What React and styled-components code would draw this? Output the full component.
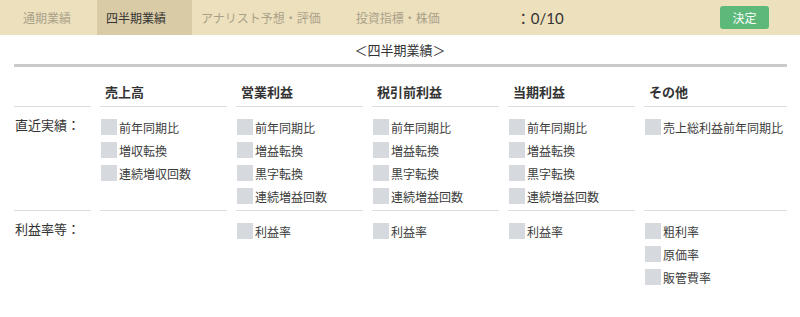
import React from "react";
import styled, { createGlobalStyle } from "styled-components";

const Global = createGlobalStyle`
  html, body { margin: 0; padding: 0; background: #fff; }
  body { font-family: "Noto Sans CJK JP", "Noto Sans", sans-serif; color: #333; }
`;

const TopBar = styled.div`
  display: flex;
  align-items: stretch;
  height: 35px;
  padding-left: 14px;
  background: #ede0bd;
`;

const Tab = styled.div`
  display: flex;
  align-items: center;
  padding: 0 26px 0 9px;
  font-size: 12px;
  color: ${(p) => (p.$active ? "#333" : "#a9a08a")};
  background: ${(p) => (p.$active ? "#d9cba6" : "transparent")};
`;

const Counter = styled.div`
  display: flex;
  align-items: center;
  margin-left: 50px;
  font-family: Lato, "Noto Sans CJK JP", sans-serif;
  font-size: 15px;
  color: #333;
`;

const Spacer = styled.div`
  flex: 1;
`;

const Button = styled.button`
  align-self: center;
  margin-right: 31px;
  width: 49px;
  height: 23px;
  border: none;
  border-radius: 3px;
  background: #5cb979;
  color: #fff;
  font-family: inherit;
  font-size: 12px;
  padding: 0;
`;

const Title = styled.div`
  text-align: center;
  font-size: 13px;
  line-height: 20px;
  padding: 5px 0 4px;
  color: #333;
`;

const Grid = styled.div`
  margin: 0 13px 0 14px;
  border-top: 3px solid #cacaca;
  display: grid;
  grid-template-columns: 77px repeat(4, 127px) 1fr;
  column-gap: 9px;
`;

const Head = styled.div`
  padding: 15px 0 4px 5px;
  line-height: 20px;
  font-size: 13px;
  font-weight: bold;
  color: #333;
  border-bottom: 1px solid #dcdcdc;
`;

const Cell = styled.div`
  display: flex;
  flex-direction: column;
  gap: 7px;
  padding: 12px 0 6px 1px;
  border-bottom: ${(p) => (p.$last ? "none" : "1px solid #dcdcdc")};
`;

const Label = styled.div`
  padding: 10px 0 6px 1px;
  font-size: 13px;
  line-height: 16px;
  color: #333;
  border-bottom: ${(p) => (p.$last ? "none" : "1px solid #dcdcdc")};
`;

const Item = styled.label`
  display: flex;
  align-items: center;
  height: 16px;
  font-size: 12px;
  color: #3c3c3c;
  white-space: nowrap;
`;

const Box = styled.span`
  width: 16px;
  height: 16px;
  background: #d6d9dd;
  margin-right: 2px;
  flex: none;
`;

const tabs = ["通期業績", "四半期業績", "アナリスト予想・評価", "投資指標・株価"];
const heads = ["売上高", "営業利益", "税引前利益", "当期利益", "その他"];
const sec1 = [
  ["前年同期比", "増収転換", "連続増収回数"],
  ["前年同期比", "増益転換", "黒字転換", "連続増益回数"],
  ["前年同期比", "増益転換", "黒字転換", "連続増益回数"],
  ["前年同期比", "増益転換", "黒字転換", "連続増益回数"],
  ["売上総利益前年同期比"],
];
const sec2 = [[], ["利益率"], ["利益率"], ["利益率"], ["粗利率", "原価率", "販管費率"]];

function Section({ label, cols, last }) {
  return (
    <>
      <Label $last={last}>{label}</Label>
      {cols.map((items, i) => (
        <Cell key={i} $last={last}>
          {items.map((t) => (
            <Item key={t}>
              <Box />
              {t}
            </Item>
          ))}
        </Cell>
      ))}
    </>
  );
}

export default function App() {
  return (
    <>
      <Global />
      <TopBar>
        {tabs.map((t, i) => (
          <Tab key={t} $active={i === 1}>
            {t}
          </Tab>
        ))}
        <Counter>：0/10</Counter>
        <Spacer />
        <Button>決定</Button>
      </TopBar>
      <Title>＜四半期業績＞</Title>
      <Grid>
        <Head />
        {heads.map((h) => (
          <Head key={h}>{h}</Head>
        ))}
        <Section label="直近実績：" cols={sec1} />
        <Section label="利益率等：" cols={sec2} last />
      </Grid>
    </>
  );
}
